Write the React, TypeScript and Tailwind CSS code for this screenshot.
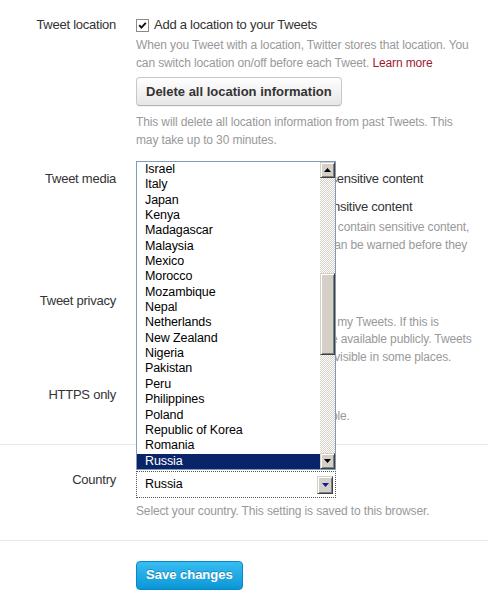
import React from 'react';

const COUNTRIES = [
  'Israel',
  'Italy',
  'Japan',
  'Kenya',
  'Madagascar',
  'Malaysia',
  'Mexico',
  'Morocco',
  'Mozambique',
  'Nepal',
  'Netherlands',
  'New Zealand',
  'Nigeria',
  'Pakistan',
  'Peru',
  'Philippines',
  'Poland',
  'Republic of Korea',
  'Romania',
  'Russia',
];

const SELECTED = 'Russia';

// classic raised 3D face used by the scrollbar buttons, thumb and select arrow
const bevel =
  'bg-[#d4d0c8] border border-[#d4d0c8] border-r-[#404040] border-b-[#404040] shadow-[inset_1px_1px_0_#ffffff,inset_-1px_-1px_0_#808080]';

const Checkbox = ({ checked = false }: { checked?: boolean }) => (
  <span className="inline-flex h-[13px] w-[13px] shrink-0 items-center justify-center border border-[#8a8a8a] bg-white">
    {checked && (
      <svg width="9" height="9" viewBox="0 0 9 9">
        <polyline points="1.2,4.2 3.4,6.6 7.8,1.8" fill="none" stroke="#111" strokeWidth="1.9" />
      </svg>
    )}
  </span>
);

const CheckLine = ({ label, checked, className = '' }: { label: string; checked?: boolean; className?: string }) => (
  <label className={`flex h-[18px] items-center gap-[5px] whitespace-nowrap text-[13px] leading-[18px] tracking-[-0.25px] text-[#333] ${className}`}>
    <Checkbox checked={checked} />
    <span>{label}</span>
  </label>
);

const Help = ({ children, className = '' }: { children: React.ReactNode; className?: string }) => (
  <p className={`whitespace-nowrap text-[12px] leading-[17.5px] tracking-[-0.13px] text-[#999] ${className}`}>{children}</p>
);

const Field = ({ label, children, className = '' }: { label: string; children: React.ReactNode; className?: string }) => (
  <div className={`flex ${className}`}>
    <div className="w-[116px] shrink-0 text-right text-[13px] leading-[18px] tracking-[-0.25px] text-[#333]">{label}</div>
    <div className="ml-[20px] min-w-0 flex-1">{children}</div>
  </div>
);

const Arrow = ({ dir, color = '#000' }: { dir: 'up' | 'down'; color?: string }) => (
  <svg width="7" height="4" viewBox="0 0 7 4">
    <polygon points={dir === 'up' ? '3.5,0 7,4 0,4' : '0,0 7,0 3.5,4'} fill={color} />
  </svg>
);

const CountryList = () => (
  <div className="absolute bottom-full left-0 z-10 mb-[1px] flex h-[309px] w-[200px] border border-[#7f9db9] bg-white">
    <ul className="flex-1 text-[12.5px] tracking-[-0.1px] text-black">
      {COUNTRIES.map((c) => (
        <li
          key={c}
          className={`h-[15.35px] pl-[8px] leading-[15.35px] ${c === SELECTED ? 'bg-[#0a246a] text-white' : ''}`}
        >
          {c}
        </li>
      ))}
    </ul>
    <div className="flex w-[15px] flex-col">
      <div className={`flex h-[16px] items-center justify-center ${bevel}`}>
        <Arrow dir="up" />
      </div>
      <div className="flex-1 bg-[repeating-conic-gradient(#d4d0c8_0_25%,#ffffff_0_50%)] bg-[length:2px_2px]">
        <div className={`mt-[95px] h-[82px] ${bevel}`} />
      </div>
      <div className={`flex h-[16px] items-center justify-center ${bevel}`}>
        <Arrow dir="down" />
      </div>
    </div>
  </div>
);

export default function App() {
  return (
    <div className="relative min-h-[602px] w-full overflow-hidden bg-white pt-[16px] font-['Liberation_Sans',Arial,sans-serif]">
      <Field label="Tweet location">
        <CheckLine label="Add a location to your Tweets" checked />
        <Help className="mt-[3px]">
          When you Tweet with a location, Twitter stores that location. You
          <br />
          can switch location on/off before each Tweet.{' '}
          <a className="text-[#a0192f]">Learn more</a>
        </Help>
        <button className="mt-[5px] h-[29px] rounded-[4px] border border-[#c8c8c8] border-b-[#b3b3b3] bg-gradient-to-b from-white to-[#e6e6e6] px-[9px] text-[13px] font-bold text-[#333] shadow-[0_1px_1px_rgba(0,0,0,0.06)]">
          Delete all location information
        </button>
        <Help className="mt-[8px]">
          This will delete all location information from past Tweets. This
          <br />
          may take up to 30 minutes.
        </Help>
      </Field>

      <Field label="Tweet media" className="mt-[21px]">
        <CheckLine label="Display media that may contain sensitive content" />
        <CheckLine label="Mark my media as containing sensitive content" className="mt-[10px]" />
        <Help className="mt-[3px]">
          Check this box if your media may ever contain sensitive content,
          <br />
          so that people who are sensitive to it can be warned before they
          <br />
          see it.
        </Help>
      </Field>

      <Field label="Tweet privacy" className="mt-[20px]">
        <CheckLine label="Protect my Tweets" />
        <Help className="mt-[4px]">
          Only let people whom I approve follow my Tweets. If this is
          <br />
          checked, your future Tweets will not be available publicly. Tweets
          <br />
          posted previously may still be publicly visible in some places.
        </Help>
      </Field>

      <Field label="HTTPS only" className="mt-[20px]">
        <CheckLine label="Always use HTTPS" />
        <Help className="mt-[4px]">Use a secure connection where possible.</Help>
      </Field>

      <hr className="mt-[18.5px] border-0 border-t border-[#e8e8e8]" />

      <Field label="Country" className="mt-[26px]">
        <div className="relative w-[200px]">
          <div className="flex h-[27px] w-[200px] items-center justify-between border border-dotted border-[#555] bg-white pl-[8px] pr-[2px]">
            <span className="text-[12.5px] tracking-[-0.1px] text-black">{SELECTED}</span>
            <span className={`flex h-[18px] w-[16px] items-center justify-center ${bevel}`}>
              <Arrow dir="down" color="#0a1fa0" />
            </span>
          </div>
          <CountryList />
        </div>
        <Help className="mt-[5px]">Select your country. This setting is saved to this browser.</Help>
      </Field>

      <hr className="mt-[19px] border-0 border-t border-[#e8e8e8]" />

      <div className="mt-[20px] pl-[136px]">
        <button className="h-[29px] rounded-[4px] border border-[#0b86c8] bg-gradient-to-b from-[#36bdf2] to-[#0597d6] px-[9px] text-[13px] font-bold text-white [text-shadow:0_-1px_0_rgba(0,0,0,0.25)]">
          Save changes
        </button>
      </div>
    </div>
  );
}
